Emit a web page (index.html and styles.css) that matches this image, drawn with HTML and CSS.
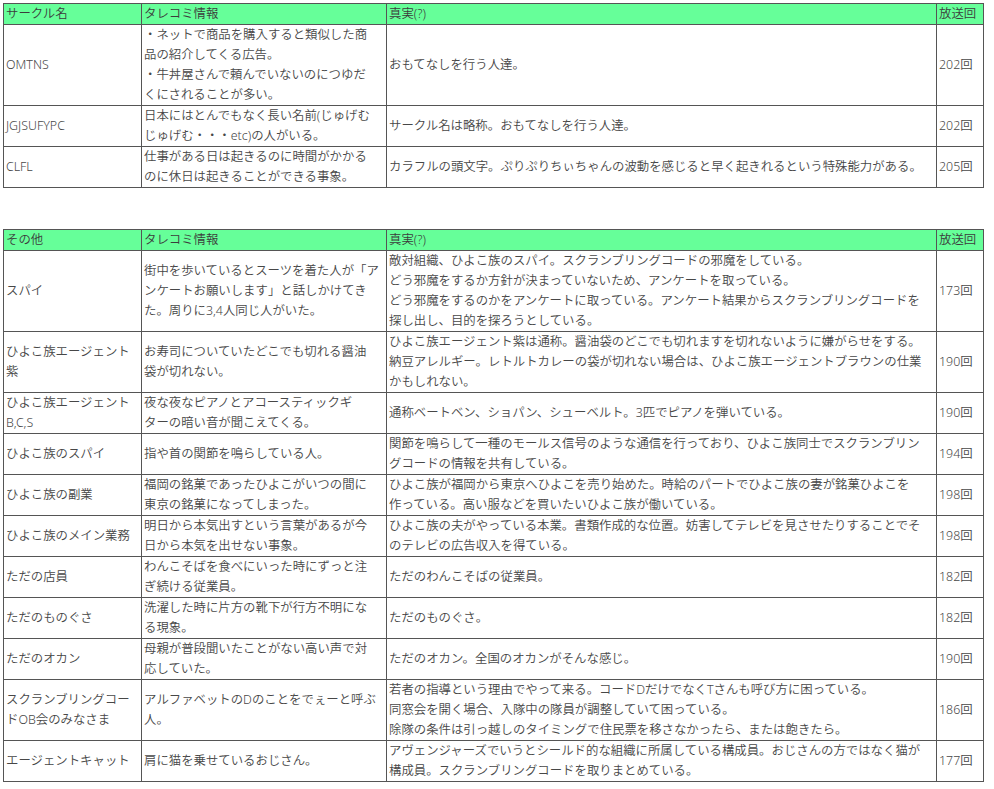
FILE: index.html
```html
<!DOCTYPE html>
<html lang="ja">
<head>
<meta charset="utf-8">
<title>サークル一覧</title>
<link rel="stylesheet" href="styles.css">
</head>
<body>
<div class="page">
<table class="data">
<colgroup><col class="c-name"><col class="c-tip"><col class="c-truth"><col class="c-ep"></colgroup>
<thead>
<tr><th>サークル名</th><th>タレコミ情報</th><th>真実(?)</th><th>放送回</th></tr>
</thead>
<tbody>
<tr><td>OMTNS</td><td>・ネットで商品を購入すると類似した商<br>品の紹介してくる広告。<br>・牛丼屋さんで頼んでいないのにつゆだ<br>くにされることが多い。</td><td>おもてなしを行う人達。</td><td>202回</td></tr>
<tr><td>JGJSUFYPC</td><td>日本にはとんでもなく長い名前(じゅげむ<br>じゅげむ・・・etc)の人がいる。</td><td>サークル名は略称。おもてなしを行う人達。</td><td>202回</td></tr>
<tr><td>CLFL</td><td>仕事がある日は起きるのに時間がかかる<br>のに休日は起きることができる事象。</td><td>カラフルの頭文字。ぷりぷりちぃちゃんの波動を感じると早く起きれるという特殊能力がある。</td><td>205回</td></tr>
</tbody>
</table>

<table class="data second">
<colgroup><col class="c-name"><col class="c-tip"><col class="c-truth"><col class="c-ep"></colgroup>
<thead>
<tr><th>その他</th><th>タレコミ情報</th><th>真実(?)</th><th>放送回</th></tr>
</thead>
<tbody>
<tr><td>スパイ</td><td>街中を歩いているとスーツを着た人が「ア<br>ンケートお願いします」と話しかけてき<br>た。周りに3,4人同じ人がいた。</td><td>敵対組織、ひよこ族のスパイ。スクランブリングコードの邪魔をしている。<br>どう邪魔をするか方針が決まっていないため、アンケートを取っている。<br>どう邪魔をするのかをアンケートに取っている。アンケート結果からスクランブリングコードを<br>探し出し、目的を探ろうとしている。</td><td>173回</td></tr>
<tr><td>ひよこ族エージェント<br>紫</td><td>お寿司についていたどこでも切れる醤油<br>袋が切れない。</td><td>ひよこ族エージェント紫は通称。醤油袋のどこでも切れますを切れないように嫌がらせをする。<br>納豆アレルギー。レトルトカレーの袋が切れない場合は、ひよこ族エージェントブラウンの仕業<br>かもしれない。</td><td>190回</td></tr>
<tr><td>ひよこ族エージェント<br>B,C,S</td><td>夜な夜なピアノとアコースティックギ<br>ターの暗い音が聞こえてくる。</td><td>通称ベートベン、ショパン、シューベルト。3匹でピアノを弾いている。</td><td>190回</td></tr>
<tr><td>ひよこ族のスパイ</td><td>指や首の関節を鳴らしている人。</td><td>関節を鳴らして一種のモールス信号のような通信を行っており、ひよこ族同士でスクランブリン<br>グコードの情報を共有している。</td><td>194回</td></tr>
<tr><td>ひよこ族の副業</td><td>福岡の銘菓であったひよこがいつの間に<br>東京の銘菓になってしまった。</td><td>ひよこ族が福岡から東京へひよこを売り始めた。時給のパートでひよこ族の妻が銘菓ひよこを<br>作っている。高い服などを買いたいひよこ族が働いている。</td><td>198回</td></tr>
<tr><td>ひよこ族のメイン業務</td><td>明日から本気出すという言葉があるが今<br>日から本気を出せない事象。</td><td>ひよこ族の夫がやっている本業。書類作成的な位置。妨害してテレビを見させたりすることでそ<br>のテレビの広告収入を得ている。</td><td>198回</td></tr>
<tr><td>ただの店員</td><td>わんこそばを食べにいった時にずっと注<br>ぎ続ける従業員。</td><td>ただのわんこそばの従業員。</td><td>182回</td></tr>
<tr><td>ただのものぐさ</td><td>洗濯した時に片方の靴下が行方不明にな<br>る現象。</td><td>ただのものぐさ。</td><td>182回</td></tr>
<tr><td>ただのオカン</td><td>母親が普段聞いたことがない高い声で対<br>応していた。</td><td>ただのオカン。全国のオカンがそんな感じ。</td><td>190回</td></tr>
<tr><td>スクランブリングコー<br>ドOB会のみなさま</td><td>アルファベットのDのことをでぇーと呼ぶ<br>人。</td><td>若者の指導という理由でやって来る。コードDだけでなくTさんも呼び方に困っている。<br>同窓会を開く場合、入隊中の隊員が調整していて困っている。<br>除隊の条件は引っ越しのタイミングで住民票を移さなかったら、または飽きたら。</td><td>186回</td></tr>
<tr><td>エージェントキャット</td><td>肩に猫を乗せているおじさん。</td><td>アヴェンジャーズでいうとシールド的な組織に所属している構成員。おじさんの方ではなく猫が<br>構成員。スクランブリングコードを取りまとめている。</td><td>177回</td></tr>
</tbody>
</table>
</div>
</body>
</html>
```

FILE: styles.css
```css
html, body {
  margin: 0;
  padding: 0;
  background: #ffffff;
}

.page {
  padding: 3px;
  font-family: "Noto Sans", "Noto Sans CJK JP", sans-serif;
  font-size: 12.4px;
  font-weight: 350;
  line-height: 20px;
  color: #474747;
}

.data {
  width: 980px;
  border-collapse: collapse;
  table-layout: fixed;
}

.data.second {
  margin-top: 41px;
}

.c-name { width: 138px; }
.c-tip { width: 245px; }
.c-truth { width: 550px; }
.c-ep { width: 47px; }

.data th,
.data td {
  border: 1px solid #555555;
  padding: 0 2px;
  text-align: left;
  vertical-align: middle;
  font-weight: 350;
  white-space: normal;
}

.data th {
  background: #66ff99;
  color: #3c3c3c;
}
```
